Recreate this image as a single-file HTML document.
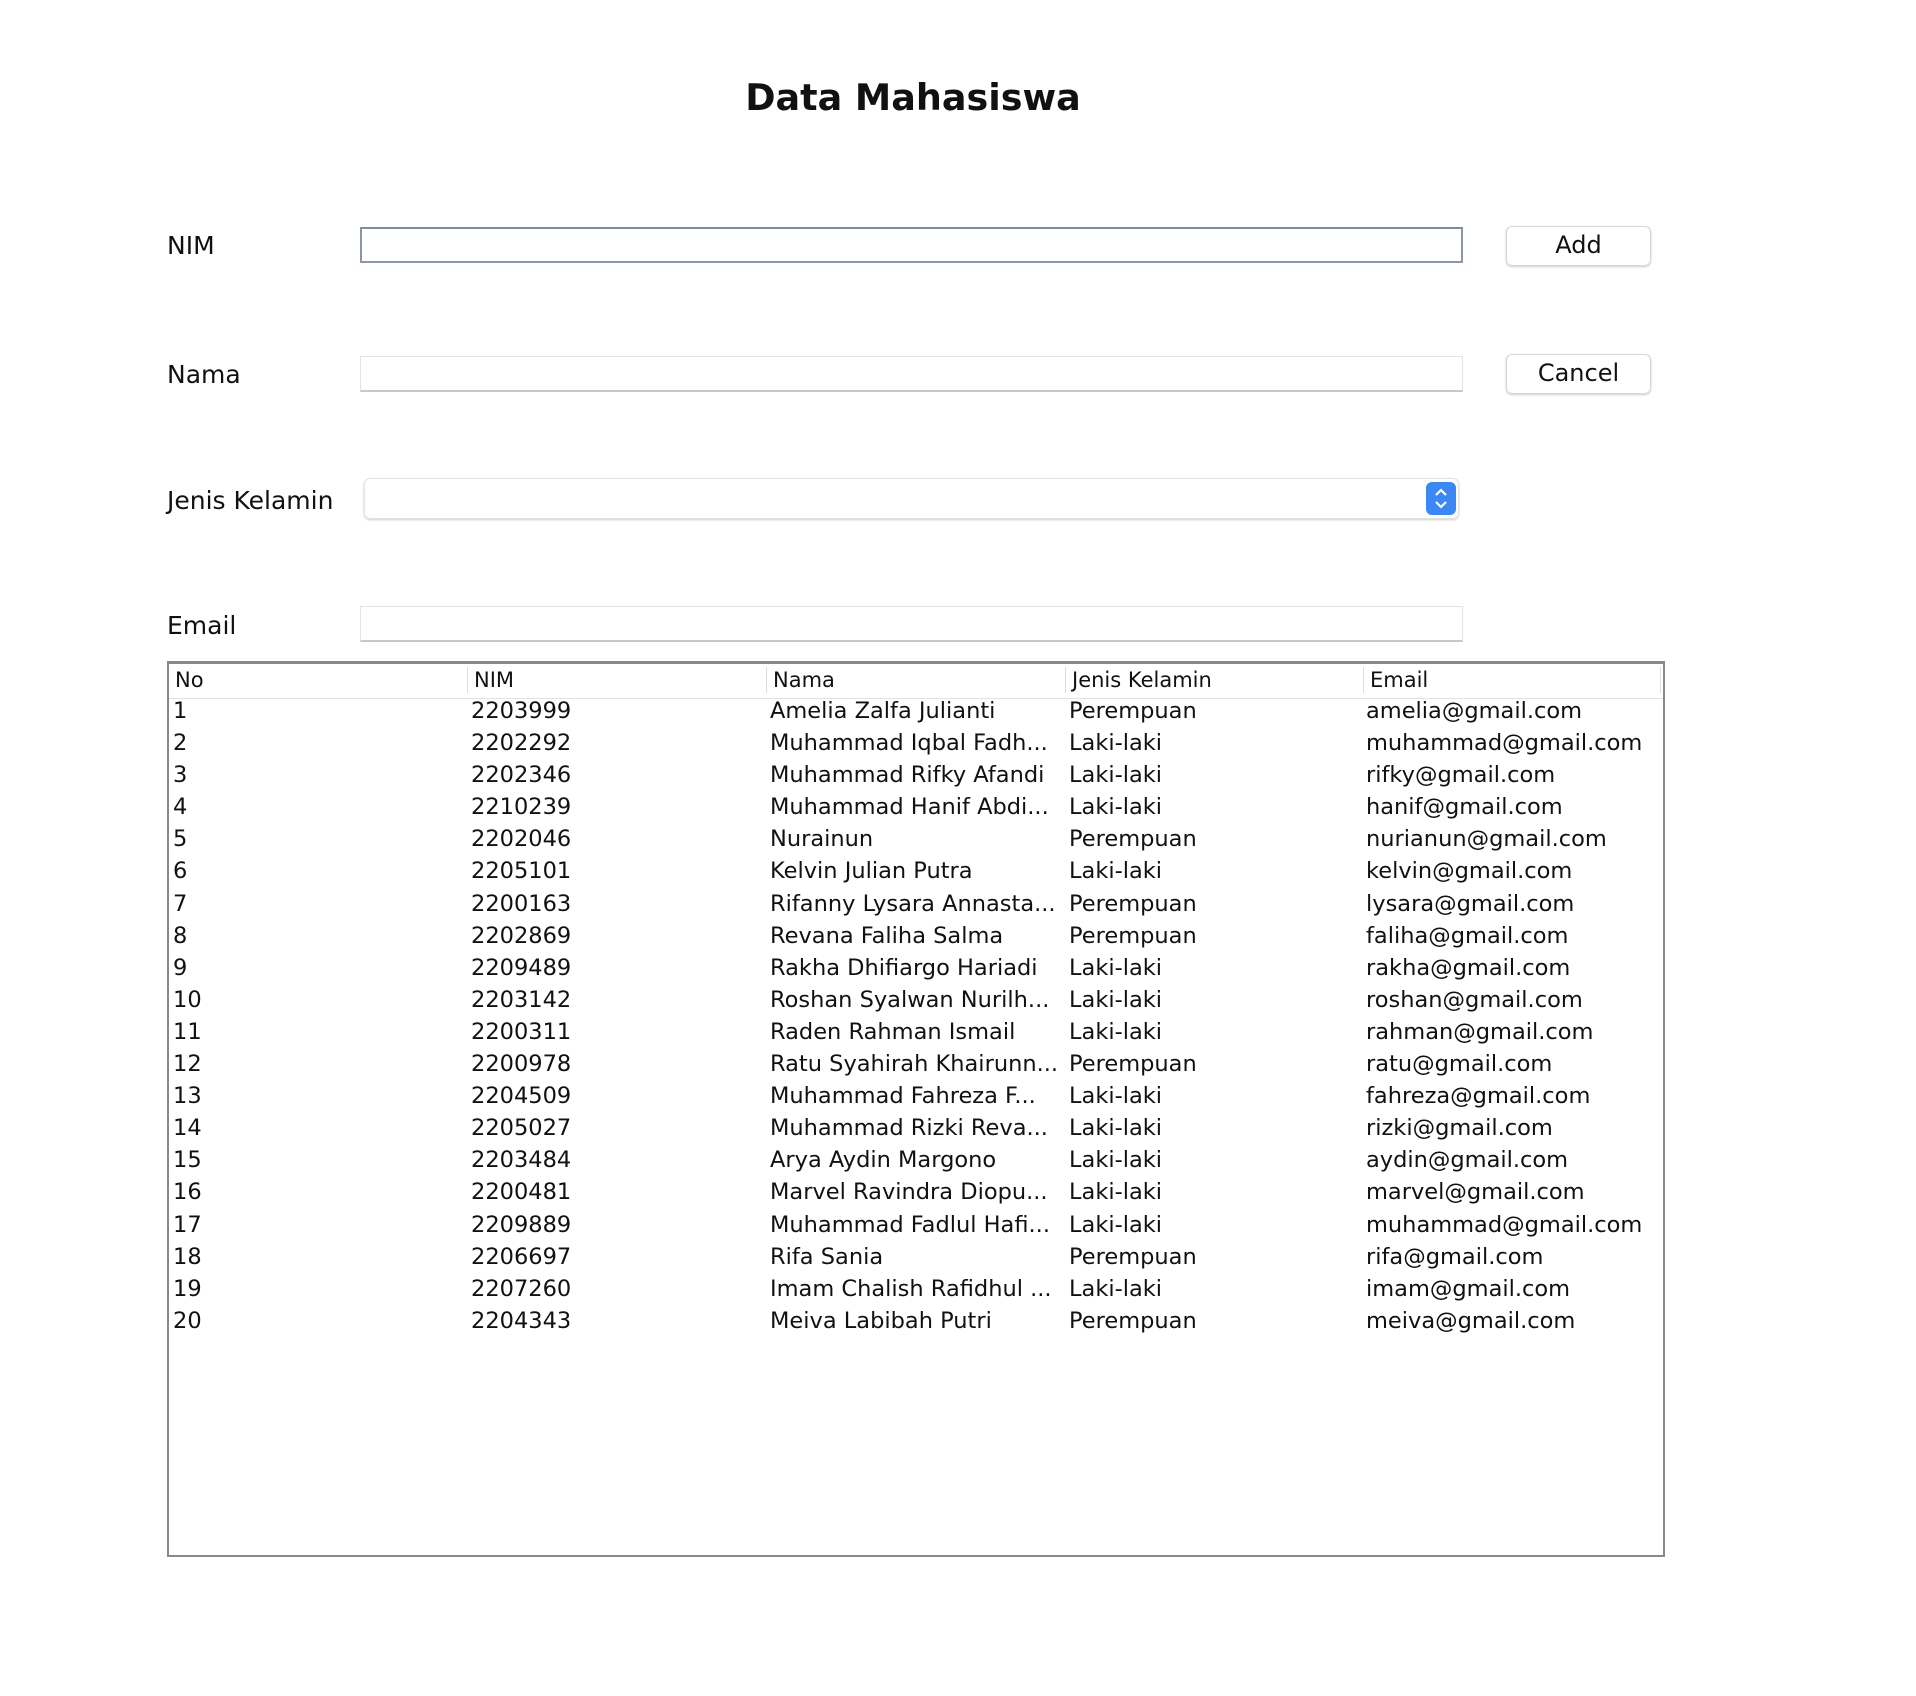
<!DOCTYPE html>
<html><head><meta charset="utf-8"><style>
body{margin:0;width:1916px;height:1696px;background:#fff;font-family:"DejaVu Sans","Liberation Sans",sans-serif;color:#111;position:relative;overflow:hidden}
.a{position:absolute}
h1{position:absolute;left:0;width:1826px;top:76px;margin:0;text-align:center;font-size:36.5px;font-weight:bold}
.lbl{position:absolute;left:167px;font-size:25px;line-height:30px}
.inp{position:absolute;left:360px;width:1103px;height:36px;border:1px solid #e4e4e4;border-bottom:2px solid #c8c8c8;box-sizing:border-box}
.btn{position:absolute;left:1506px;width:145px;height:40px;border:1px solid #d6d6d6;border-radius:6px;box-shadow:0 1px 2px rgba(0,0,0,.2);box-sizing:border-box;text-align:center;font-size:24px;line-height:37px}
.tbl{position:absolute;left:167px;top:661px;width:1498px;height:896px;border:2px solid #888;border-top-width:3px;box-sizing:border-box}
.hd{height:34px;border-bottom:1px solid #e2e2e2;position:relative;font-size:21px}
.hd span{position:absolute;top:3px;padding-left:6px;border-left:1px solid #ddd;height:26px;line-height:26px}
.row{height:32.1px;position:relative;line-height:32px;font-size:22.5px}
.row span{position:absolute;top:0;white-space:nowrap}
</style></head><body>
<h1>Data Mahasiswa</h1>
<div class="lbl" style="top:231px">NIM</div>
<div class="inp" style="top:227px;border:2px solid #8a96a6;border-top-color:#7f8c9c"></div>
<div class="btn" style="top:226px">Add</div>
<div class="lbl" style="top:360px">Nama</div>
<div class="inp" style="top:356px"></div>
<div class="btn" style="top:354px">Cancel</div>
<div class="lbl" style="top:486px">Jenis Kelamin</div>
<div class="a" style="left:364px;top:478px;width:1095px;height:41px;border:1px solid #e2e2e2;border-radius:6px;box-shadow:0 1px 2px rgba(0,0,0,.2);box-sizing:border-box"></div>
<div class="a" style="left:1426px;top:482px;width:30px;height:33px;background:#3a87f5;border-radius:6px">
<svg width="30" height="33" viewBox="0 0 30 33"><path d="M10 13 L15 8 L20 13 M10 20 L15 25 L20 20" stroke="#fff" stroke-width="2.2" fill="none"/></svg></div>
<div class="lbl" style="top:611px">Email</div>
<div class="inp" style="top:606px"></div>
<div class="tbl">
<div class="hd"><span style="left:0;border-left:none">No</span><span style="left:298px">NIM</span><span style="left:597px">Nama</span><span style="left:896px">Jenis Kelamin</span><span style="left:1194px">Email</span><span style="left:1491px;padding:0"></span></div>
</div>
<div class="a" style="left:167px;top:695px;width:1498px">
<div class="row"><span style="left:6px">1</span><span style="left:304px">2203999</span><span style="left:603px">Amelia Zalfa Julianti</span><span style="left:902px">Perempuan</span><span style="left:1199px">amelia@gmail.com</span></div>
<div class="row"><span style="left:6px">2</span><span style="left:304px">2202292</span><span style="left:603px">Muhammad Iqbal Fadh...</span><span style="left:902px">Laki-laki</span><span style="left:1199px">muhammad@gmail.com</span></div>
<div class="row"><span style="left:6px">3</span><span style="left:304px">2202346</span><span style="left:603px">Muhammad Rifky Afandi</span><span style="left:902px">Laki-laki</span><span style="left:1199px">rifky@gmail.com</span></div>
<div class="row"><span style="left:6px">4</span><span style="left:304px">2210239</span><span style="left:603px">Muhammad Hanif Abdi...</span><span style="left:902px">Laki-laki</span><span style="left:1199px">hanif@gmail.com</span></div>
<div class="row"><span style="left:6px">5</span><span style="left:304px">2202046</span><span style="left:603px">Nurainun</span><span style="left:902px">Perempuan</span><span style="left:1199px">nurianun@gmail.com</span></div>
<div class="row"><span style="left:6px">6</span><span style="left:304px">2205101</span><span style="left:603px">Kelvin Julian Putra</span><span style="left:902px">Laki-laki</span><span style="left:1199px">kelvin@gmail.com</span></div>
<div class="row"><span style="left:6px">7</span><span style="left:304px">2200163</span><span style="left:603px">Rifanny Lysara Annasta...</span><span style="left:902px">Perempuan</span><span style="left:1199px">lysara@gmail.com</span></div>
<div class="row"><span style="left:6px">8</span><span style="left:304px">2202869</span><span style="left:603px">Revana Faliha Salma</span><span style="left:902px">Perempuan</span><span style="left:1199px">faliha@gmail.com</span></div>
<div class="row"><span style="left:6px">9</span><span style="left:304px">2209489</span><span style="left:603px">Rakha Dhifiargo Hariadi</span><span style="left:902px">Laki-laki</span><span style="left:1199px">rakha@gmail.com</span></div>
<div class="row"><span style="left:6px">10</span><span style="left:304px">2203142</span><span style="left:603px">Roshan Syalwan Nurilh...</span><span style="left:902px">Laki-laki</span><span style="left:1199px">roshan@gmail.com</span></div>
<div class="row"><span style="left:6px">11</span><span style="left:304px">2200311</span><span style="left:603px">Raden Rahman Ismail</span><span style="left:902px">Laki-laki</span><span style="left:1199px">rahman@gmail.com</span></div>
<div class="row"><span style="left:6px">12</span><span style="left:304px">2200978</span><span style="left:603px">Ratu Syahirah Khairunn...</span><span style="left:902px">Perempuan</span><span style="left:1199px">ratu@gmail.com</span></div>
<div class="row"><span style="left:6px">13</span><span style="left:304px">2204509</span><span style="left:603px">Muhammad Fahreza F...</span><span style="left:902px">Laki-laki</span><span style="left:1199px">fahreza@gmail.com</span></div>
<div class="row"><span style="left:6px">14</span><span style="left:304px">2205027</span><span style="left:603px">Muhammad Rizki Reva...</span><span style="left:902px">Laki-laki</span><span style="left:1199px">rizki@gmail.com</span></div>
<div class="row"><span style="left:6px">15</span><span style="left:304px">2203484</span><span style="left:603px">Arya Aydin Margono</span><span style="left:902px">Laki-laki</span><span style="left:1199px">aydin@gmail.com</span></div>
<div class="row"><span style="left:6px">16</span><span style="left:304px">2200481</span><span style="left:603px">Marvel Ravindra Diopu...</span><span style="left:902px">Laki-laki</span><span style="left:1199px">marvel@gmail.com</span></div>
<div class="row"><span style="left:6px">17</span><span style="left:304px">2209889</span><span style="left:603px">Muhammad Fadlul Hafi...</span><span style="left:902px">Laki-laki</span><span style="left:1199px">muhammad@gmail.com</span></div>
<div class="row"><span style="left:6px">18</span><span style="left:304px">2206697</span><span style="left:603px">Rifa Sania</span><span style="left:902px">Perempuan</span><span style="left:1199px">rifa@gmail.com</span></div>
<div class="row"><span style="left:6px">19</span><span style="left:304px">2207260</span><span style="left:603px">Imam Chalish Rafidhul ...</span><span style="left:902px">Laki-laki</span><span style="left:1199px">imam@gmail.com</span></div>
<div class="row"><span style="left:6px">20</span><span style="left:304px">2204343</span><span style="left:603px">Meiva Labibah Putri</span><span style="left:902px">Perempuan</span><span style="left:1199px">meiva@gmail.com</span></div>
</div>
</body></html>
